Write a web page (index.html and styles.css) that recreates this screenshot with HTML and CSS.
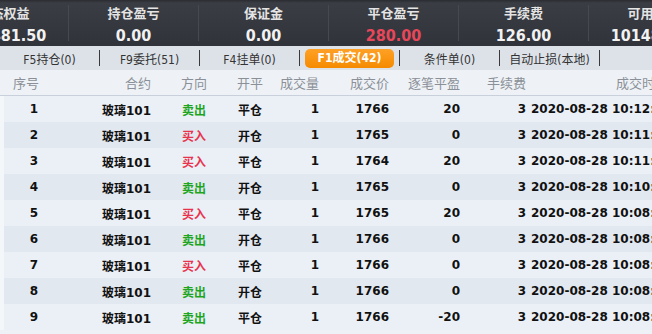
FILE: index.html
```html
<!DOCTYPE html>
<html lang="zh-CN">
<head>
<meta charset="UTF-8" />
<meta name="viewport" content="width=device-width, initial-scale=1.0"/>
<title>成交</title>
<link rel="stylesheet" href="styles.css">
</head>
<body>

<div class="summary">
  <div class="stat"><div class="stat-label">动态权益</div><div class="stat-value">101481.50</div></div>
  <div class="stat"><div class="stat-label">持仓盈亏</div><div class="stat-value">0.00</div></div>
  <div class="stat"><div class="stat-label">保证金</div><div class="stat-value">0.00</div></div>
  <div class="stat"><div class="stat-label">平仓盈亏</div><div class="stat-value loss">280.00</div></div>
  <div class="stat"><div class="stat-label">手续费</div><div class="stat-value">126.00</div></div>
  <div class="stat"><div class="stat-label">可用资金</div><div class="stat-value">101481.50</div></div>
</div>

<div class="tabs">
  <div class="tab">F5持仓(0)</div><span class="tab-sep"></span>
  <div class="tab">F9委托(51)</div><span class="tab-sep"></span>
  <div class="tab">F4挂单(0)</div><span class="tab-sep"></span>
  <div class="tab"><span class="tab-active">F1成交(42)</span></div><span class="tab-sep"></span>
  <div class="tab">条件单(0)</div><span class="tab-sep"></span>
  <div class="tab">自动止损(本地)</div><span class="tab-sep"></span>
</div>

<table class="trades">
  <colgroup>
    <col style="width:45px"><col style="width:115px"><col style="width:68px"><col style="width:44px">
    <col style="width:54px"><col style="width:70px"><col style="width:71px"><col style="width:61px"><col style="width:147px">
  </colgroup>
  <thead>
    <tr>
      <th class="c-no">序号</th>
      <th class="c-right">合约</th>
      <th class="c-center">方向</th>
      <th class="c-center">开平</th>
      <th class="c-right">成交量</th>
      <th class="c-right">成交价</th>
      <th class="c-right">逐笔平盈</th>
      <th class="c-fee">手续费</th>
      <th class="c-right">成交时间</th>
    </tr>
  </thead>
  <tbody>
    <tr><td class="c-no">1</td><td class="c-right">玻璃101</td><td class="c-center sell">卖出</td><td class="c-center">平仓</td><td class="c-right">1</td><td class="c-right">1766</td><td class="c-right">20</td><td class="c-fee">3</td><td class="c-time">2020-08-28 10:12:25</td></tr>
    <tr><td class="c-no">2</td><td class="c-right">玻璃101</td><td class="c-center buy">买入</td><td class="c-center">开仓</td><td class="c-right">1</td><td class="c-right">1765</td><td class="c-right">0</td><td class="c-fee">3</td><td class="c-time">2020-08-28 10:11:48</td></tr>
    <tr><td class="c-no">3</td><td class="c-right">玻璃101</td><td class="c-center buy">买入</td><td class="c-center">平仓</td><td class="c-right">1</td><td class="c-right">1764</td><td class="c-right">20</td><td class="c-fee">3</td><td class="c-time">2020-08-28 10:11:02</td></tr>
    <tr><td class="c-no">4</td><td class="c-right">玻璃101</td><td class="c-center sell">卖出</td><td class="c-center">开仓</td><td class="c-right">1</td><td class="c-right">1765</td><td class="c-right">0</td><td class="c-fee">3</td><td class="c-time">2020-08-28 10:10:37</td></tr>
    <tr><td class="c-no">5</td><td class="c-right">玻璃101</td><td class="c-center buy">买入</td><td class="c-center">平仓</td><td class="c-right">1</td><td class="c-right">1765</td><td class="c-right">20</td><td class="c-fee">3</td><td class="c-time">2020-08-28 10:08:59</td></tr>
    <tr><td class="c-no">6</td><td class="c-right">玻璃101</td><td class="c-center sell">卖出</td><td class="c-center">开仓</td><td class="c-right">1</td><td class="c-right">1766</td><td class="c-right">0</td><td class="c-fee">3</td><td class="c-time">2020-08-28 10:08:41</td></tr>
    <tr><td class="c-no">7</td><td class="c-right">玻璃101</td><td class="c-center buy">买入</td><td class="c-center">平仓</td><td class="c-right">1</td><td class="c-right">1766</td><td class="c-right">0</td><td class="c-fee">3</td><td class="c-time">2020-08-28 10:08:40</td></tr>
    <tr><td class="c-no">8</td><td class="c-right">玻璃101</td><td class="c-center sell">卖出</td><td class="c-center">开仓</td><td class="c-right">1</td><td class="c-right">1766</td><td class="c-right">0</td><td class="c-fee">3</td><td class="c-time">2020-08-28 10:08:12</td></tr>
    <tr><td class="c-no">9</td><td class="c-right">玻璃101</td><td class="c-center sell">卖出</td><td class="c-center">平仓</td><td class="c-right">1</td><td class="c-right">1766</td><td class="c-right">-20</td><td class="c-fee">3</td><td class="c-time">2020-08-28 10:08:05</td></tr>
  </tbody>
</table>

</body>
</html>
```

FILE: styles.css
```css
body {
  margin: 0;
  width: 652px;
  height: 334px;
  overflow: hidden;
  background-color: #eef2f7;
  font-family: "DejaVu Sans", "Noto Sans CJK SC", sans-serif;
  color: #111;
}

/* top summary bar */
.summary {
  display: flex;
  height: 46px;
  box-sizing: border-box;
  padding-top: 5px;
  margin-left: -61px;
  background: linear-gradient(#2a2c31 0px, #3a3d44 3px, #30333a 46px);
}

.stat {
  flex: 0 0 130px;
  box-sizing: border-box;
  height: 36px;
  border-right: 1px solid #464950;
  text-align: center;
}

.stat-label {
  font-family: "Noto Sans CJK SC", sans-serif;
  font-size: 13px;
  font-weight: bold;
  line-height: 16px;
  color: #e4e4e4;
}

.stat-value {
  margin-top: 5px;
  font-family: "DejaVu Sans", sans-serif;
  font-stretch: condensed;
  font-size: 16px;
  font-weight: bold;
  line-height: 20px;
  color: #f2f2f2;
}

.stat-value.loss {
  color: #e8475a;
}

/* tab strip */
.tabs {
  display: flex;
  align-items: center;
  height: 24px;
  background-color: #dde2e9;
}

.tab {
  flex: 0 0 99px;
  display: flex;
  justify-content: center;
  align-items: center;
  height: 24px;
  font-size: 12px;
  font-stretch: condensed;
  color: #333;
}

.tab-active {
  flex: 1;
  margin: 0 5px;
  height: 19px;
  line-height: 19px;
  border-radius: 5px;
  text-align: center;
  background: linear-gradient(#ffa126, #f58a00);
  color: #fff;
  font-weight: bold;
}

.tab-sep {
  width: 1px;
  height: 16px;
  background-color: #3a3a3a;
}

/* trades table */
.trades {
  table-layout: fixed;
  width: 675px;
  border-collapse: collapse;
  font-size: 12px;
}

.trades th {
  height: 25px;
  padding: 0 7px;
  background-color: #eef2f6;
  border-bottom: 1px solid #c8d1db;
  font-family: "Noto Sans CJK SC", sans-serif;
  font-size: 13px;
  font-weight: normal;
  color: #8b9098;
  white-space: nowrap;
  overflow: hidden;
}

.trades td {
  height: 26px;
  padding: 0 7px;
  font-weight: bold;
  white-space: nowrap;
  overflow: hidden;
}

.trades tbody tr:nth-child(odd) td {
  background-color: #ebf0f7;
}

.trades tbody tr:nth-child(even) td {
  background-color: #e2e8f0;
}

.trades tbody td.c-no {
  background-image: linear-gradient(to right, #f4f7fa 4px, transparent 4px);
}

.trades th.c-no {
  text-align: left;
  padding-left: 13px;
}

.trades td.c-no {
  text-align: right;
}

.c-right {
  text-align: right;
}

.trades .c-right:nth-child(2) {
  padding-right: 9px;
}

.c-center {
  text-align: center;
}

.trades .c-fee {
  text-align: right;
  padding-right: 2px;
}

.trades .c-time {
  padding-left: 3px;
  overflow: visible;
}

.sell {
  color: #1fa51f;
}

.buy {
  color: #e8334d;
}
```
